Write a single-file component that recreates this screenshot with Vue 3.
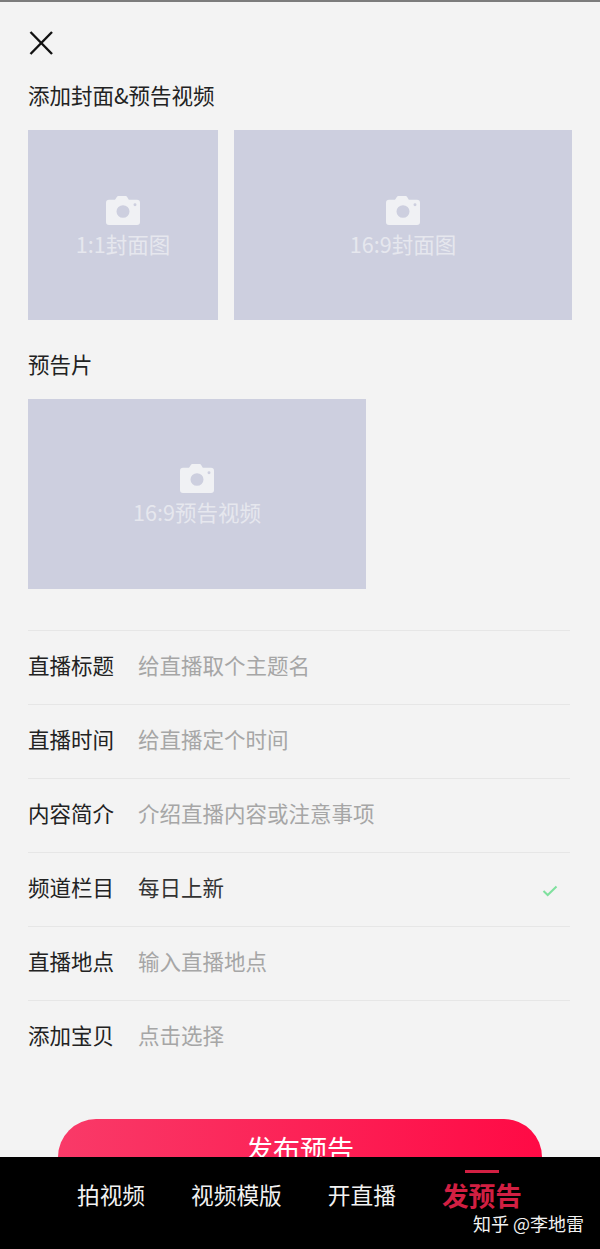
<script setup>
const covers = [
  { label: "1:1封面图", wide: false },
  { label: "16:9封面图", wide: true },
]

const rows = [
  { label: "直播标题", value: "给直播取个主题名" },
  { label: "直播时间", value: "给直播定个时间" },
  { label: "内容简介", value: "介绍直播内容或注意事项" },
  { label: "频道栏目", value: "每日上新", filled: true, checked: true },
  { label: "直播地点", value: "输入直播地点" },
  { label: "添加宝贝", value: "点击选择" },
]

const tabs = [
  { label: "拍视频" },
  { label: "视频模版" },
  { label: "开直播" },
  { label: "发预告", active: true },
]
</script>

<template>
  <div class="page">
    <main class="content">
      <button class="close" aria-label="关闭">
        <svg width="26" height="26" viewBox="0 0 26 26" fill="none" stroke="#111" stroke-width="2.4">
          <line x1="2.500" y1="2" x2="24" y2="24"></line>
          <line x1="24" y1="2" x2="2.500" y2="24"></line>
        </svg>
      </button>

      <h2 class="section-title">添加封面&amp;预告视频</h2>
      <div class="covers">
        <div v-for="cover in covers" :key="cover.label" class="tile" :class="{ wide: cover.wide, square: !cover.wide }">
          <svg class="camera" width="34" height="29" viewBox="0 0 34 30" preserveAspectRatio="none">
            <path
              fill="#f0f1f4"
              fill-rule="evenodd"
              d="M3 4h6l2-3.200q.4-.8 1.300-.8h7.400q.9 0 1.300.8L22.800 4H31q3 0 3 3v20q0 3-3 3H3q-3 0-3-3V7q0-3 3-3ZM17 9.500a6.500 6.500 0 1 0 0 13 6.500 6.500 0 0 0 0-13ZM29 7.500a1.500 1.500 0 1 0 0 3 1.500 1.500 0 0 0 0-3Z"
            />
          </svg>
          <span class="tile-label">{{ cover.label }}</span>
        </div>
      </div>

      <h2 class="section-title trailer-title">预告片</h2>
      <div class="tile wide trailer">
        <svg class="camera" width="34" height="29" viewBox="0 0 34 30" preserveAspectRatio="none">
          <path
            fill="#f0f1f4"
            fill-rule="evenodd"
            d="M3 4h6l2-3.200q.4-.8 1.300-.8h7.400q.9 0 1.300.8L22.800 4H31q3 0 3 3v20q0 3-3 3H3q-3 0-3-3V7q0-3 3-3ZM17 9.500a6.500 6.500 0 1 0 0 13 6.500 6.500 0 0 0 0-13ZM29 7.500a1.500 1.500 0 1 0 0 3 1.500 1.500 0 0 0 0-3Z"
          />
        </svg>
        <span class="tile-label">16:9预告视频</span>
      </div>

      <ul class="form">
        <li v-for="row in rows" :key="row.label" class="row">
          <span class="row-label">{{ row.label }}</span>
          <span class="row-value" :class="{ filled: row.filled }">{{ row.value }}</span>
          <svg v-if="row.checked" class="check" width="16" height="12" viewBox="0 0 16 12" fill="none" stroke="#7fe09e" stroke-width="2">
            <path d="M1.500 6l4.200 4L14.500 1.500"></path>
          </svg>
        </li>
      </ul>

      <button class="publish">发布预告</button>
    </main>

    <nav class="tabbar">
      <div v-for="tab in tabs" :key="tab.label" class="tab" :class="{ active: tab.active }">
        {{ tab.label }}
      </div>
    </nav>

    <span class="watermark">知乎 @李地雷</span>
  </div>
</template>

<style>
html,
body {
  margin: 0;
  background: #f3f3f3;
}
</style>

<style scoped>
.page {
  position: relative;
  display: flex;
  flex-direction: column;
  width: 600px;
  height: 1249px;
  overflow: hidden;
  background: #f3f3f3;
  border-top: 2px solid #7c7c7c;
  box-sizing: border-box;
  font-family: "Noto Sans CJK SC", "Liberation Sans", sans-serif;
}

.content {
  flex: 1;
  min-height: 0;
  overflow: hidden;
  padding: 28px 28px 0;
}

.close {
  display: block;
  width: 26px;
  height: 26px;
  padding: 0;
  border: none;
  background: none;
}

.section-title {
  margin: 23px 0 0;
  font-size: 21.5px;
  line-height: 32px;
  font-weight: 400;
  color: #222;
}

.covers {
  display: flex;
  gap: 16px;
  margin-top: 19px;
}

.tile {
  display: flex;
  flex-direction: column;
  align-items: center;
  justify-content: center;
  gap: 4px;
  height: 190px;
  box-sizing: border-box;
  padding-top: 5px;
  background: #cdcfdf;
}

.square {
  width: 190px;
}

.wide {
  width: 338px;
}

.tile-label {
  font-size: 21.5px;
  line-height: 30px;
  color: #e6e7ee;
}

.trailer-title {
  margin-top: 28px;
}

.trailer {
  margin-top: 19px;
  padding-top: 3px;
}

.form {
  list-style: none;
  margin: 41px 0 0;
  padding: 0;
  width: 542px;
}

.row {
  display: flex;
  align-items: center;
  height: 74px;
  box-sizing: border-box;
  padding-bottom: 6px;
  border-top: 1px solid #e6e6e6;
}

.row-label {
  width: 110px;
  flex: none;
  font-size: 21.5px;
  color: #222;
}

.row-value {
  flex: 1;
  font-size: 21.5px;
  color: #a6a6a6;
}

.row-value.filled {
  color: #333;
}

.check {
  margin: 8px 12px 0 0;
}

.publish {
  display: block;
  width: 484px;
  height: 76px;
  margin: 45px 0 0 30px;
  padding: 0 0 16px;
  border: none;
  border-radius: 38px;
  background: linear-gradient(90deg, #f93a68 0%, #ff0a45 100%);
  color: #fff;
  font-family: inherit;
  font-size: 27px;
  line-height: 40px;
}

.tabbar {
  flex: none;
  display: flex;
  align-items: flex-start;
  height: 92px;
  padding: 0 0 0 77px;
  gap: 46px;
  background: #000;
}

.tab {
  margin-top: 21px;
  font-size: 22.7px;
  line-height: 34px;
  color: #f2f2f2;
}

.tab.active {
  position: relative;
  font-size: 26.700px;
  line-height: 38px;
  margin-top: 19px;
  font-weight: 700;
  color: #d21f42;
}

.tab.active::before {
  content: "";
  position: absolute;
  top: -6px;
  left: 23px;
  width: 34px;
  height: 3px;
  background: #d21f42;
}

.watermark {
  position: absolute;
  right: 16px;
  bottom: 13px;
  font-size: 18px;
  line-height: 26px;
  color: #f2f2f2;
}
</style>
